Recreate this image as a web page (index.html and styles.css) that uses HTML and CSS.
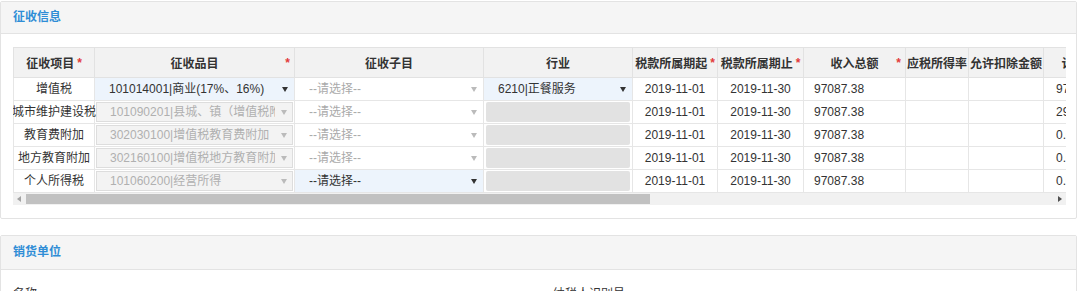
FILE: index.html
```html
<!DOCTYPE html>
<html lang="zh-CN">
<head>
<meta charset="utf-8">
<title>征收信息</title>
<link rel="stylesheet" href="styles.css">
</head>
<body>
<section class="panel">
  <div class="panel-head">征收信息</div>
  <div class="panel-body">
    <div class="grid-wrap">
      <table class="grid">
        <colgroup>
          <col class="c1"><col class="c2"><col class="c3"><col class="c4"><col class="c5">
          <col class="c6"><col class="c7"><col class="c8"><col class="c9"><col class="c10">
        </colgroup>
        <thead>
          <tr>
            <th><div class="th-center">征收项目<span class="star">*</span></div></th>
            <th><div class="th-split"><span></span><span>征收品目</span><span class="star">*</span></div></th>
            <th><div class="th-center">征收子目</div></th>
            <th><div class="th-center">行业</div></th>
            <th><div class="th-center">税款所属期起<span class="star">*</span></div></th>
            <th><div class="th-center">税款所属期止<span class="star">*</span></div></th>
            <th><div class="th-split"><span></span><span>收入总额</span><span class="star">*</span></div></th>
            <th><div class="th-center">应税所得率</div></th>
            <th><div class="th-center">允许扣除金额</div></th>
            <th><div class="th-center">计税依据</div></th>
          </tr>
        </thead>
        <tbody>
          <tr>
            <td><div class="name">增值税</div></td>
            <td><div class="sel active"><span>101014001|商业(17%、16%)</span><i class="arrow"></i></div></td>
            <td><div class="sel plain"><span>--请选择--</span><i class="arrow"></i></div></td>
            <td><div class="sel active"><span>6210|正餐服务</span><i class="arrow"></i></div></td>
            <td class="center">2019-11-01</td>
            <td class="center">2019-11-30</td>
            <td class="num">97087.38</td>
            <td></td>
            <td></td>
            <td class="num2">97087.38</td>
          </tr>
          <tr>
            <td><div class="name">城市维护建设税</div></td>
            <td><div class="sel disabled"><span>101090201|县城、镇（增值税附加）</span><i class="arrow"></i></div></td>
            <td><div class="sel plain"><span>--请选择--</span><i class="arrow"></i></div></td>
            <td><div class="blank"></div></td>
            <td class="center">2019-11-01</td>
            <td class="center">2019-11-30</td>
            <td class="num">97087.38</td>
            <td></td>
            <td></td>
            <td class="num2">2912.62</td>
          </tr>
          <tr>
            <td><div class="name">教育费附加</div></td>
            <td><div class="sel disabled"><span>302030100|增值税教育费附加</span><i class="arrow"></i></div></td>
            <td><div class="sel plain"><span>--请选择--</span><i class="arrow"></i></div></td>
            <td><div class="blank"></div></td>
            <td class="center">2019-11-01</td>
            <td class="center">2019-11-30</td>
            <td class="num">97087.38</td>
            <td></td>
            <td></td>
            <td class="num2">0.00</td>
          </tr>
          <tr>
            <td><div class="name">地方教育附加</div></td>
            <td><div class="sel disabled"><span>302160100|增值税地方教育附加</span><i class="arrow"></i></div></td>
            <td><div class="sel plain"><span>--请选择--</span><i class="arrow"></i></div></td>
            <td><div class="blank"></div></td>
            <td class="center">2019-11-01</td>
            <td class="center">2019-11-30</td>
            <td class="num">97087.38</td>
            <td></td>
            <td></td>
            <td class="num2">0.00</td>
          </tr>
          <tr>
            <td><div class="name">个人所得税</div></td>
            <td><div class="sel disabled"><span>101060200|经营所得</span><i class="arrow"></i></div></td>
            <td><div class="sel active"><span>--请选择--</span><i class="arrow"></i></div></td>
            <td><div class="blank"></div></td>
            <td class="center">2019-11-01</td>
            <td class="center">2019-11-30</td>
            <td class="num">97087.38</td>
            <td></td>
            <td></td>
            <td class="num2">0.00</td>
          </tr>
        </tbody>
      </table>
    </div>
    <div class="hscroll">
      <span class="sb-btn"><i class="tri-left"></i></span>
      <div class="sb-track"><div class="sb-thumb"></div></div>
      <span class="sb-btn"><i class="tri-right"></i></span>
    </div>
  </div>
</section>

<section class="panel panel-second">
  <div class="panel-head panel-head-tall">销货单位</div>
  <div class="panel-body form-grid">
    <div class="field-label">名称</div>
    <div class="field-label">纳税人识别号</div>
  </div>
</section>
</body>
</html>
```

FILE: styles.css
```css
* { box-sizing: border-box; }

html, body {
  margin: 0;
  padding: 0;
  background: #ffffff;
  font-family: "Liberation Sans", "Noto Sans CJK SC", sans-serif;
  font-size: 12px;
  color: #333333;
}

body {
  padding-top: 1px;
  overflow: hidden;
}

.panel {
  width: 1077px;
  border: 1px solid #e3e3e3;
  border-radius: 2px;
  background: #ffffff;
}

.panel-second {
  margin-top: 16px;
}

.panel-head {
  height: 32px;
  line-height: 31px;
  padding-left: 12px;
  background: #f5f5f5;
  border-bottom: 1px solid #e3e3e3;
  color: #2f8dd6;
  font-weight: bold;
  font-size: 12px;
}

.panel-head-tall {
  height: 34px;
  line-height: 33px;
}

.panel-body {
  padding: 13px 10px 13px 12px;
}

.grid-wrap {
  width: 1053px;
  overflow: hidden;
}

.grid {
  table-layout: fixed;
  border-collapse: collapse;
  width: 1110px;
}

.c1 { width: 81px; }
.c2 { width: 200px; }
.c3 { width: 189px; }
.c4 { width: 149px; }
.c5 { width: 85px; }
.c6 { width: 86px; }
.c7 { width: 102px; }
.c8 { width: 63px; }
.c9 { width: 75px; }
.c10 { width: 84px; }

.grid th {
  height: 30px;
  padding: 0;
  background: #f2f2f2;
  border: 1px solid #e2e2e2;
  font-weight: bold;
  color: #333333;
  white-space: nowrap;
}

.th-center {
  display: flex;
  justify-content: center;
  align-items: center;
  white-space: nowrap;
}

.th-split {
  display: grid;
  grid-template-columns: 1fr auto 1fr;
  align-items: center;
}

.th-split .star {
  justify-self: end;
  padding-right: 4px;
}

.star {
  color: #e23b3b;
  margin-left: 3px;
  font-size: 12px;
}

.grid td {
  height: 22px;
  padding: 0;
  border: 1px solid #e6e6e6;
  line-height: 22px;
  white-space: nowrap;
  overflow: visible;
}

.name {
  display: flex;
  justify-content: center;
  white-space: nowrap;
}

.center { text-align: center; }
.num { padding-left: 10px !important; }
.num2 { padding-left: 12px !important; }

.sel {
  display: flex;
  align-items: center;
  justify-content: space-between;
  height: 22px;
  padding: 0 6px 0 14px;
  overflow: hidden;
}

.sel span {
  overflow: hidden;
  white-space: nowrap;
  flex: 1;
  min-width: 0;
}

.sel.active {
  background: #edf4fc;
  color: #333333;
}

.sel.plain {
  background: #ffffff;
  color: #aaaaaa;
}

.sel.disabled {
  margin: 1px;
  height: 20px;
  padding-left: 13px;
  padding-right: 5px;
  background: #f3f3f3;
  border: 1px solid #dddddd;
  color: #b0b0b0;
}

.arrow {
  display: block;
  flex: none;
  width: 0;
  height: 0;
  margin-left: 6px;
  border-left: 3px solid transparent;
  border-right: 3px solid transparent;
  border-top: 5px solid #333333;
}

.sel.plain .arrow,
.sel.disabled .arrow {
  border-top-color: #bbbbbb;
}

.blank {
  height: 20px;
  margin: 1px 2px;
  background: #e2e2e2;
  border-radius: 2px;
}

.hscroll {
  display: flex;
  width: 1053px;
  height: 12px;
  background: #f1f1f1;
}

.sb-btn {
  width: 12px;
  display: flex;
  align-items: center;
  justify-content: center;
}

.sb-track {
  flex: 1;
  display: flex;
  align-items: stretch;
}

.sb-thumb {
  width: 624px;
  margin: 1px 0 1px 1px;
  background: #c1c1c1;
}

.tri-left {
  width: 0;
  height: 0;
  border-top: 3px solid transparent;
  border-bottom: 3px solid transparent;
  border-right: 4px solid #a3a3a3;
}

.tri-right {
  width: 0;
  height: 0;
  border-top: 3px solid transparent;
  border-bottom: 3px solid transparent;
  border-left: 4px solid #505050;
}

.form-grid {
  display: grid;
  grid-template-columns: 512px 1fr;
  column-gap: 28px;
  padding-top: 16px;
}

.field-label {
  line-height: 16px;
  color: #333333;
}
```
